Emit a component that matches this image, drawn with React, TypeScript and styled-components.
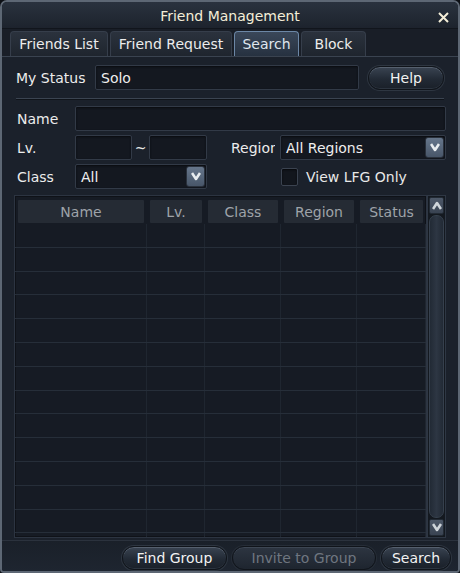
import React from "react";
import styled, { createGlobalStyle, css } from "styled-components";

const GlobalStyle = createGlobalStyle`
  html, body {
    margin: 0;
    padding: 0;
    background: #0c0f14;
  }
  * {
    box-sizing: border-box;
  }
`;

const Window = styled.div`
  width: 460px;
  height: 573px;
  display: flex;
  flex-direction: column;
  font-family: "DejaVu Sans", Verdana, sans-serif;
  font-size: 14px;
  color: #e8e8e8;
  background: #171c25;
  border: 2px solid #5d6774;
  border-radius: 7px 7px 4px 4px;
  box-shadow: inset 0 0 0 1px #0d1017;
  overflow: hidden;
`;

const TitleBar = styled.div`
  position: relative;
  height: 27px;
  flex-shrink: 0;
  display: flex;
  align-items: center;
  justify-content: center;
  padding-top: 1px;
  color: #f4eed8;
  background: linear-gradient(#2a323e, #1d232d);
  border-bottom: 1px solid #11151c;
`;

const CloseButton = styled.button`
  position: absolute;
  right: 8px;
  top: 8px;
  width: 14px;
  height: 14px;
  padding: 0;
  border: none;
  background: none;
  display: flex;
  align-items: center;
  justify-content: center;
`;

const TabBar = styled.div`
  height: 27px;
  flex-shrink: 0;
  display: flex;
  align-items: flex-end;
  gap: 2px;
  padding-left: 8px;
  background: #191e27;
`;

const Tab = styled.div<{ $w: number; $active?: boolean }>`
  width: ${(p) => p.$w}px;
  height: 25px;
  display: flex;
  align-items: center;
  justify-content: center;
  border: 1px solid #363e4b;
  border-bottom: none;
  border-radius: 4px 4px 0 0;
  background: linear-gradient(#2b323d, #1f252e);
  color: #ececec;
  ${(p) =>
    p.$active &&
    css`
      border-color: #6c87a6;
      background: linear-gradient(#3a4759, #263140);
      color: #dfe6ee;
    `}
`;

const Panel = styled.div`
  flex: 1;
  min-height: 0;
  display: flex;
  flex-direction: column;
  padding: 8px 12px 0 12px;
  background: #1b212b;
  border-top: 1px solid #3a4350;
  overflow: hidden;
`;

const Row = styled.div<{ $mb?: number }>`
  display: flex;
  align-items: center;
  flex-shrink: 0;
  margin-bottom: ${(p) => p.$mb ?? 4}px;
`;

const Label = styled.div<{ $w: number; $ml?: number }>`
  width: ${(p) => p.$w}px;
  margin-left: ${(p) => p.$ml ?? 0}px;
  flex-shrink: 0;
  white-space: nowrap;
  overflow: hidden;
  color: #ececec;
`;

const Field = styled.div<{ $w?: number; $ml?: number }>`
  height: 25px;
  ${(p) => (p.$w ? `width: ${p.$w}px; flex-shrink: 0;` : "flex: 1;")}
  margin-left: ${(p) => p.$ml ?? 0}px;
  display: flex;
  align-items: center;
  padding: 0 5px;
  background: #141820;
  border: 1px solid #323a47;
  border-radius: 2px;
  box-shadow: inset 0 1px 2px #0a0c10;
  color: #eeeeee;
  position: relative;
`;

const DropButton = styled.div`
  position: absolute;
  right: 1px;
  top: 1px;
  width: 19px;
  height: 21px;
  border: 1px solid #2a313c;
  border-radius: 3px;
  background: linear-gradient(#66768b, #485669);
  display: flex;
  align-items: center;
  justify-content: center;
`;

const Tilde = styled.div`
  width: 17px;
  text-align: center;
  color: #e8e8e8;
`;

const Divider = styled.div`
  height: 2px;
  flex-shrink: 0;
  margin: 0 2px 6px 2px;
  border-top: 1px solid #3b4451;
  border-bottom: 1px solid #10141a;
`;

const PillButton = styled.button<{ $w: number; $disabled?: boolean }>`
  width: ${(p) => p.$w}px;
  height: 24px;
  flex-shrink: 0;
  padding: 0;
  font-family: inherit;
  font-size: 14px;
  color: ${(p) => (p.$disabled ? "#6f7680" : "#f2f2f2")};
  border: 1px solid #10141a;
  border-radius: 12px;
  background: linear-gradient(#3a4452, #222a35 55%, #1a2029);
  box-shadow: inset 0 1px 0 #56606e, inset 0 -1px 0 #2c343f, 0 0 0 1px #2e3641;
  ${(p) =>
    p.$disabled &&
    css`
      background: linear-gradient(#2d3541, #1e252f);
      box-shadow: inset 0 1px 0 #3d4653, 0 0 0 1px #262d37;
    `}
`;

const HelpButton = styled(PillButton)`
  margin: 0 2px 0 9px;
`;

const Checkbox = styled.div`
  width: 17px;
  height: 18px;
  margin-left: 74px;
  margin-right: 8px;
  border: 1px solid #3b4350;
  border-radius: 2px;
  background: #12161d;
  box-shadow: inset 0 1px 2px #07090c;
`;

const TableArea = styled.div`
  flex: 1;
  min-height: 0;
  display: flex;
  margin: 2px 0 2px 0;
`;

const Table = styled.div`
  flex: 1;
  min-height: 0;
  display: flex;
  flex-direction: column;
  background: #161b24;
  border: 1px solid #2c3441;
  box-shadow: inset 0 0 0 1px #0f1218;
  overflow: hidden;
`;

const columns = "132px 58px 76px 76px 1fr";

const HeaderRow = styled.div`
  display: grid;
  grid-template-columns: ${columns};
  padding-top: 4px;
  height: 28px;
  flex-shrink: 0;
`;

const HeaderCell = styled.div`
  margin: 0 3px 1px 3px;
  background: #252b34;
  color: #9ea3a9;
  display: flex;
  align-items: center;
  justify-content: center;
  border-radius: 1px;
`;

const BodyRow = styled.div`
  display: grid;
  grid-template-columns: ${columns};
  height: 23.8px;
  flex-shrink: 0;
  border-bottom: 1px solid #262e39;
`;

const BodyCell = styled.div`
  border-right: 1px solid #1f2630;
`;

const Scrollbar = styled.div`
  width: 19px;
  flex-shrink: 0;
  display: flex;
  flex-direction: column;
  padding: 1px;
  gap: 1px;
  border: 1px solid #2e3744;
  background: #141920;
`;

const ScrollButton = styled.div`
  height: 17px;
  flex-shrink: 0;
  border: 1px solid #222a34;
  border-radius: 2px;
  background: linear-gradient(#4d5868, #394352);
  display: flex;
  align-items: center;
  justify-content: center;
`;

const Thumb = styled.div`
  flex: 1;
  border: 1px solid #36404d;
  border-radius: 7px;
  background: linear-gradient(90deg, #222a35, #2d3643 50%, #222a35);
`;

const Footer = styled.div`
  height: 31px;
  flex-shrink: 0;
  display: flex;
  align-items: flex-end;
  justify-content: flex-end;
  gap: 5px;
  padding: 0 7px 1px 0;
  background: linear-gradient(#1a2029, #1e2530);
  border-top: 1px solid #2b323d;
`;

const Chevron = ({ up, color = "#e8ecef" }: { up?: boolean; color?: string }) => (
  <svg width="10" height="9" viewBox="0 0 10 9">
    <path
      d={up ? "M1 8 L5 2 L9 8" : "M1 1 L5 7 L9 1"}
      fill="none"
      stroke={color}
      strokeWidth="2.6"
      strokeLinejoin="round"
    />
  </svg>
);

const headers = ["Name", "Lv.", "Class", "Region", "Status"];

export default function App() {
  return (
    <>
      <GlobalStyle />
      <Window>
        <TitleBar>
          Friend Management
          <CloseButton>
            <svg width="11" height="11" viewBox="0 0 11 11">
              <path d="M1 1 L10 10 M10 1 L1 10" stroke="#f4eed8" strokeWidth="2" />
            </svg>
          </CloseButton>
        </TitleBar>
        <TabBar>
          <Tab $w={98}>Friends List</Tab>
          <Tab $w={122}>Friend Request</Tab>
          <Tab $w={65} $active>
            Search
          </Tab>
          <Tab $w={65}>Block</Tab>
        </TabBar>
        <Panel>
          <Row $mb={8}>
            <Label $w={79} $ml={2}>My Status</Label>
            <Field>Solo</Field>
            <HelpButton $w={76}>Help</HelpButton>
          </Row>
          <Divider />
          <Row>
            <Label $w={58} $ml={3}>Name</Label>
            <Field />
          </Row>
          <Row>
            <Label $w={58} $ml={3}>Lv.</Label>
            <Field $w={57} />
            <Tilde>~</Tilde>
            <Field $w={58} />
            <Label $w={44} $ml={24}>Region</Label>
            <Field $ml={5}>
              All Regions
              <DropButton>
                <Chevron />
              </DropButton>
            </Field>
          </Row>
          <Row $mb={4}>
            <Label $w={58} $ml={3}>Class</Label>
            <Field $w={132}>
              All
              <DropButton>
                <Chevron />
              </DropButton>
            </Field>
            <Checkbox />
            View LFG Only
          </Row>
          <TableArea>
            <Table>
              <HeaderRow>
                {headers.map((h) => (
                  <HeaderCell key={h}>{h}</HeaderCell>
                ))}
              </HeaderRow>
              {Array.from({ length: 14 }).map((_, i) => (
                <BodyRow key={i}>
                  {headers.map((h) => (
                    <BodyCell key={h} />
                  ))}
                </BodyRow>
              ))}
            </Table>
            <Scrollbar>
              <ScrollButton>
                <Chevron up color="#cfd5da" />
              </ScrollButton>
              <Thumb />
              <ScrollButton>
                <Chevron color="#cfd5da" />
              </ScrollButton>
            </Scrollbar>
          </TableArea>
        </Panel>
        <Footer>
          <PillButton $w={105}>Find Group</PillButton>
          <PillButton $w={144} $disabled>
            Invite to Group
          </PillButton>
          <PillButton $w={70}>Search</PillButton>
        </Footer>
      </Window>
    </>
  );
}
